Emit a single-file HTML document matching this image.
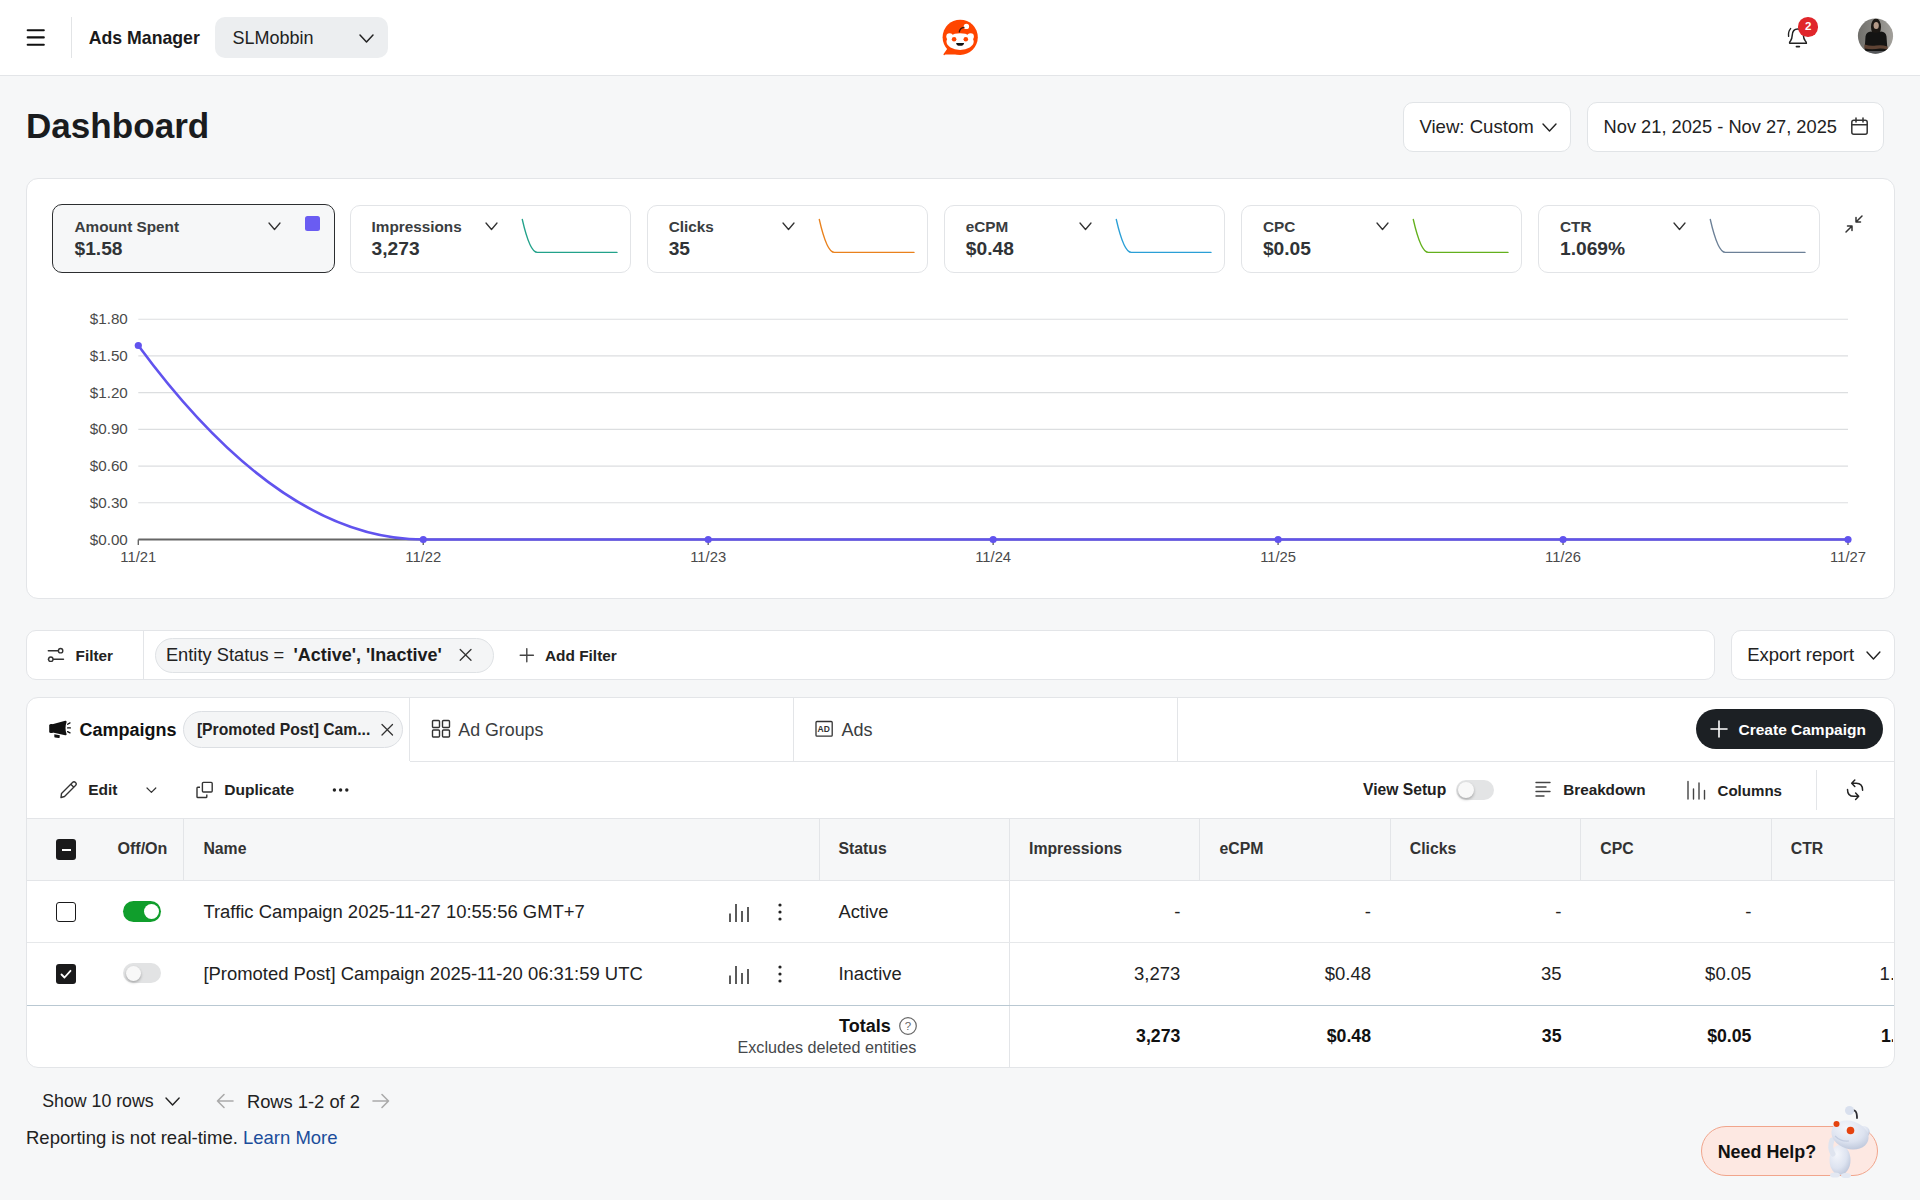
<!DOCTYPE html>
<html><head><meta charset="utf-8"><title>Ads Manager - Dashboard</title>
<style>
html,body{margin:0;padding:0;}
body{width:1920px;height:1200px;overflow:hidden;position:relative;background:#f6f7f8;font-family:"Liberation Sans",sans-serif;}
.t{position:absolute;line-height:1;white-space:nowrap;}
.r{position:absolute;}
svg.r{overflow:visible;}
</style></head><body>
<div class="r" style="left:0px;top:0px;width:1920px;height:75px;background:#fff;"></div>
<div class="r" style="left:0px;top:75px;width:1920px;height:1px;background:#e3e5e8;"></div>
<svg class="r" style="left:26px;top:26px" width="20" height="22" viewBox="0 0 20 22"><path d="M1.7 4.2H17.8M1.7 11.4H17.8M1.7 18.8H17.8" stroke="#111" stroke-width="2.1" stroke-linecap="round"/></svg>
<div class="r" style="left:71px;top:17px;width:1px;height:41px;background:#e2e4e6;"></div>
<div class="t" style="left:88.75px;top:29.52px;font-size:17.7px;font-weight:700;color:#1a1a1b;">Ads Manager</div>
<div class="r" style="left:215px;top:17px;width:173px;height:41px;background:#eceef0;border-radius:10px;"></div>
<div class="t" style="left:232.50px;top:29.26px;font-size:18px;color:#222;">SLMobbin</div>
<svg class="r" style="left:358px;top:33px" width="17" height="11" viewBox="-2 -2 17 11"><path d="M0 0 L6.5 7 L13 0" fill="none" stroke="#222" stroke-width="1.5" stroke-linecap="round" stroke-linejoin="round"/></svg>
<svg class="r" style="left:941px;top:19px" width="38" height="38" viewBox="0 0 38 38"><circle cx="19.2" cy="18.3" r="17.6" fill="#ff4500"/><path d="M3.2 35.4H19.5L9.5 25.5Z" fill="#ff4500"/><path d="M3.2 35.4L9 27.2" stroke="#ff4500" stroke-width="1.5" stroke-linecap="round"/><ellipse cx="19.1" cy="22.6" rx="13.6" ry="8.3" fill="#fff"/><circle cx="8.6" cy="17.6" r="3.3" fill="#fff"/><circle cx="29.6" cy="17.6" r="3.3" fill="#fff"/><circle cx="25.4" cy="7.4" r="2.7" fill="#fff"/><path d="M18.3 12.8Q19 8.8 23 8.3" stroke="#3a1a10" stroke-width="1.3" fill="none" stroke-linecap="round"/><circle cx="13.1" cy="20.2" r="2.3" fill="#ff4500"/><circle cx="24.8" cy="20.2" r="2.3" fill="#ff4500"/><path d="M15.1 23.9H23.1Q22.8 26.8 19.1 26.8Q15.4 26.8 15.1 23.9Z" fill="#111"/></svg>
<svg class="r" style="left:1786px;top:26px" width="24" height="24" viewBox="0 0 24 24"><path d="M3.6 17.2H20.4Q20.6 16.4 19.2 14.8Q17.6 12.8 17.4 9.5Q17.2 3 11.8 3Q6.4 3 6.2 9.5Q6 12.8 4.6 14.8Q3.2 16.4 3.6 17.2Z" fill="none" stroke="#222" stroke-width="1.5" stroke-linejoin="round"/><path d="M10.5 20.6H13.3" stroke="#222" stroke-width="1.8" stroke-linecap="round"/><path d="M4.6 2.6Q2 5.5 2.6 10.3" stroke="#222" stroke-width="1.4" fill="none" stroke-linecap="round"/></svg>
<div class="r" style="left:1798.4px;top:17.1px;width:19.59999999999991px;height:19.6px;background:#e0262b;border-radius:50%;"></div>
<div class="t" style="left:1798.4px;width:19.6px;text-align:center;top:20.87px;font-size:11.5px;font-weight:700;color:#fff;">2</div>
<svg class="r" style="left:1857px;top:18px" width="37" height="37" viewBox="0 0 37 37"><defs><clipPath id="av"><circle cx="18.5" cy="18.1" r="17.6"/></clipPath><linearGradient id="avg" x1="0" y1="0" x2="1" y2="0"><stop offset="0" stop-color="#6f6e6a"/><stop offset="1" stop-color="#a3a19c"/></linearGradient></defs><g clip-path="url(#av)"><rect width="37" height="37" fill="url(#avg)"/><ellipse cx="19" cy="9" rx="5" ry="8.5" fill="#1c1814"/><ellipse cx="19.2" cy="7.5" rx="2.6" ry="3.6" fill="#b49a88"/><path d="M8.5 18.5Q9 14 14 13.5L19 15L24 13.5Q29 14 29.5 18.5L30.5 33H7.5Z" fill="#141413"/><path d="M7.5 26.5Q14 28.5 19 27.5Q25 26.5 30.5 28.5L30.5 31.5Q24 30 19 31Q13 31.5 7.5 30.5Z" fill="#5e4334"/><rect x="8" y="33" width="22" height="5" fill="#55575a"/></g></svg>
<div class="t" style="left:26.00px;top:108.09px;font-size:35.1px;font-weight:700;color:#1a1c1e;">Dashboard</div>
<div class="r" style="left:1403px;top:102px;width:168px;height:50px;background:#fff;border:1px solid #e1e4e7;border-radius:10px;box-sizing:border-box;"></div>
<div class="t" style="left:1419.40px;top:117.86px;font-size:18.6px;color:#222;">View: Custom</div>
<svg class="r" style="left:1541px;top:122px" width="17" height="11" viewBox="-2 -2 17 11"><path d="M0 0 L6.5 7 L13 0" fill="none" stroke="#222" stroke-width="1.4" stroke-linecap="round" stroke-linejoin="round"/></svg>
<div class="r" style="left:1587px;top:102px;width:297px;height:50px;background:#fff;border:1px solid #e1e4e7;border-radius:10px;box-sizing:border-box;"></div>
<div class="t" style="left:1603.60px;top:118.15px;font-size:18.25px;color:#222;">Nov 21, 2025 - Nov 27, 2025</div>
<svg class="r" style="left:1850px;top:117px" width="19" height="19" viewBox="0 0 19 19"><rect x="1.8" y="3.2" width="15.4" height="14" rx="2" fill="none" stroke="#333" stroke-width="1.5"/><path d="M1.8 7.8H17.2M6 1V5M13 1V5" stroke="#333" stroke-width="1.5" stroke-linecap="round"/></svg>
<div class="r" style="left:25.5px;top:178px;width:1869.0px;height:421px;background:#fff;border:1px solid #e3e5e8;border-radius:12px;box-sizing:border-box;"></div>
<div class="r" style="left:52px;top:204px;width:282.5px;height:69px;background:#f6f7f8;border:1.7px solid #2c2e30;border-radius:10px;box-sizing:border-box;"></div>
<svg class="r" style="left:267px;top:221px" width="15" height="10.5" viewBox="-2 -2 15 10.5"><path d="M0 0 L5.5 6.5 L11 0" fill="none" stroke="#333" stroke-width="1.3" stroke-linecap="round" stroke-linejoin="round"/></svg>
<div class="r" style="left:305px;top:216px;width:15px;height:15px;background:#6a5cf2;border-radius:2.5px;"></div>
<div class="t" style="left:74.50px;top:219.05px;font-size:15.3px;font-weight:700;color:#3a3d40;">Amount Spent</div>
<div class="t" style="left:74.50px;top:239.05px;font-size:19.2px;font-weight:700;color:#303336;">$1.58</div>
<div class="r" style="left:349.60px;top:204.5px;width:281.5px;height:68px;background:#fff;border:1px solid #e2e4e7;border-radius:10px;box-sizing:border-box;"></div>
<svg class="r" style="left:484.0px;top:221px" width="15.0" height="10.5" viewBox="-2 -2 15.0 10.5"><path d="M0 0 L5.5 6.5 L11.0 0" fill="none" stroke="#333" stroke-width="1.3" stroke-linecap="round" stroke-linejoin="round"/></svg>
<svg class="r" style="left:521.6px;top:218px" width="96" height="37" viewBox="0 0 96 37"><path d="M0.3 1.5C5.3 23.4 10.3 34.4 15.3 34.4L95 34.4" fill="none" stroke="#22a28a" stroke-width="1.35" stroke-linecap="round"/></svg>
<div class="t" style="left:371.60px;top:219.05px;font-size:15.3px;font-weight:700;color:#3a3d40;">Impressions</div>
<div class="t" style="left:371.60px;top:239.05px;font-size:19.2px;font-weight:700;color:#303336;">3,273</div>
<div class="r" style="left:646.70px;top:204.5px;width:281.5px;height:68px;background:#fff;border:1px solid #e2e4e7;border-radius:10px;box-sizing:border-box;"></div>
<svg class="r" style="left:781.1px;top:221px" width="15.0" height="10.5" viewBox="-2 -2 15.0 10.5"><path d="M0 0 L5.5 6.5 L11.0 0" fill="none" stroke="#333" stroke-width="1.3" stroke-linecap="round" stroke-linejoin="round"/></svg>
<svg class="r" style="left:818.7px;top:218px" width="96" height="37" viewBox="0 0 96 37"><path d="M0.3 1.5C5.3 23.4 10.3 34.4 15.3 34.4L95 34.4" fill="none" stroke="#e9811c" stroke-width="1.35" stroke-linecap="round"/></svg>
<div class="t" style="left:668.70px;top:219.05px;font-size:15.3px;font-weight:700;color:#3a3d40;">Clicks</div>
<div class="t" style="left:668.70px;top:239.05px;font-size:19.2px;font-weight:700;color:#303336;">35</div>
<div class="r" style="left:943.80px;top:204.5px;width:281.5px;height:68px;background:#fff;border:1px solid #e2e4e7;border-radius:10px;box-sizing:border-box;"></div>
<svg class="r" style="left:1078.2px;top:221px" width="15.0" height="10.5" viewBox="-2 -2 15.0 10.5"><path d="M0 0 L5.5 6.5 L11.0 0" fill="none" stroke="#333" stroke-width="1.3" stroke-linecap="round" stroke-linejoin="round"/></svg>
<svg class="r" style="left:1115.8px;top:218px" width="96" height="37" viewBox="0 0 96 37"><path d="M0.3 1.5C5.3 23.4 10.3 34.4 15.3 34.4L95 34.4" fill="none" stroke="#2a9fd6" stroke-width="1.35" stroke-linecap="round"/></svg>
<div class="t" style="left:965.80px;top:219.05px;font-size:15.3px;font-weight:700;color:#3a3d40;">eCPM</div>
<div class="t" style="left:965.80px;top:239.05px;font-size:19.2px;font-weight:700;color:#303336;">$0.48</div>
<div class="r" style="left:1240.90px;top:204.5px;width:281.5px;height:68px;background:#fff;border:1px solid #e2e4e7;border-radius:10px;box-sizing:border-box;"></div>
<svg class="r" style="left:1375.3000000000002px;top:221px" width="15.0" height="10.5" viewBox="-2 -2 15.0 10.5"><path d="M0 0 L5.5 6.5 L11.0 0" fill="none" stroke="#333" stroke-width="1.3" stroke-linecap="round" stroke-linejoin="round"/></svg>
<svg class="r" style="left:1412.9px;top:218px" width="96" height="37" viewBox="0 0 96 37"><path d="M0.3 1.5C5.3 23.4 10.3 34.4 15.3 34.4L95 34.4" fill="none" stroke="#63b01c" stroke-width="1.35" stroke-linecap="round"/></svg>
<div class="t" style="left:1262.90px;top:219.05px;font-size:15.3px;font-weight:700;color:#3a3d40;">CPC</div>
<div class="t" style="left:1262.90px;top:239.05px;font-size:19.2px;font-weight:700;color:#303336;">$0.05</div>
<div class="r" style="left:1538.00px;top:204.5px;width:281.5px;height:68px;background:#fff;border:1px solid #e2e4e7;border-radius:10px;box-sizing:border-box;"></div>
<svg class="r" style="left:1672.4px;top:221px" width="15.0" height="10.5" viewBox="-2 -2 15.0 10.5"><path d="M0 0 L5.5 6.5 L11.0 0" fill="none" stroke="#333" stroke-width="1.3" stroke-linecap="round" stroke-linejoin="round"/></svg>
<svg class="r" style="left:1710.0px;top:218px" width="96" height="37" viewBox="0 0 96 37"><path d="M0.3 1.5C5.3 23.4 10.3 34.4 15.3 34.4L95 34.4" fill="none" stroke="#6c8097" stroke-width="1.35" stroke-linecap="round"/></svg>
<div class="t" style="left:1560.00px;top:219.05px;font-size:15.3px;font-weight:700;color:#3a3d40;">CTR</div>
<div class="t" style="left:1560.00px;top:239.05px;font-size:19.2px;font-weight:700;color:#303336;">1.069%</div>
<svg class="r" style="left:1844px;top:214px" width="20" height="20" viewBox="0 0 20 20"><path d="M2 18L8 12M8 12V16.5M8 12H3.5M18 2L12 8M12 8V3.5M12 8H16.5" fill="none" stroke="#333" stroke-width="1.5" stroke-linecap="round" stroke-linejoin="round"/></svg>
<svg class="r" style="left:0;top:0" width="1920" height="600"><line x1="138.3" y1="319.20" x2="1848" y2="319.20" stroke="#dcdee0" stroke-width="1.1"/><line x1="138.3" y1="355.92" x2="1848" y2="355.92" stroke="#dcdee0" stroke-width="1.1"/><line x1="138.3" y1="392.64" x2="1848" y2="392.64" stroke="#dcdee0" stroke-width="1.1"/><line x1="138.3" y1="429.36" x2="1848" y2="429.36" stroke="#dcdee0" stroke-width="1.1"/><line x1="138.3" y1="466.08" x2="1848" y2="466.08" stroke="#dcdee0" stroke-width="1.1"/><line x1="138.3" y1="502.80" x2="1848" y2="502.80" stroke="#dcdee0" stroke-width="1.1"/><line x1="138.3" y1="539.5" x2="1848" y2="539.5" stroke="#666" stroke-width="1.8"/><line x1="138.30" y1="539.5" x2="138.30" y2="545.0" stroke="#666" stroke-width="1.4"/><line x1="423.25" y1="539.5" x2="423.25" y2="545.0" stroke="#666" stroke-width="1.4"/><line x1="708.20" y1="539.5" x2="708.20" y2="545.0" stroke="#666" stroke-width="1.4"/><line x1="993.15" y1="539.5" x2="993.15" y2="545.0" stroke="#666" stroke-width="1.4"/><line x1="1278.10" y1="539.5" x2="1278.10" y2="545.0" stroke="#666" stroke-width="1.4"/><line x1="1563.05" y1="539.5" x2="1563.05" y2="545.0" stroke="#666" stroke-width="1.4"/><line x1="1848.00" y1="539.5" x2="1848.00" y2="545.0" stroke="#666" stroke-width="1.4"/><path d="M138.30 345.5 C233.30 474.70 328.25 539.5 423.25 539.5 L1848.00 539.5" fill="none" stroke="#6153ee" stroke-width="2.6"/><circle cx="138.30" cy="345.5" r="3.6" fill="#6153ee"/><circle cx="423.25" cy="539.5" r="3.6" fill="#6153ee"/><circle cx="708.20" cy="539.5" r="3.6" fill="#6153ee"/><circle cx="993.15" cy="539.5" r="3.6" fill="#6153ee"/><circle cx="1278.10" cy="539.5" r="3.6" fill="#6153ee"/><circle cx="1563.05" cy="539.5" r="3.6" fill="#6153ee"/><circle cx="1848.00" cy="539.5" r="3.6" fill="#6153ee"/></svg>
<div class="t" style="right:1792.20px;text-align:right;top:311.33px;font-size:15.2px;color:#4a4a4a;">$1.80</div>
<div class="t" style="right:1792.20px;text-align:right;top:348.05px;font-size:15.2px;color:#4a4a4a;">$1.50</div>
<div class="t" style="right:1792.20px;text-align:right;top:384.77px;font-size:15.2px;color:#4a4a4a;">$1.20</div>
<div class="t" style="right:1792.20px;text-align:right;top:421.49px;font-size:15.2px;color:#4a4a4a;">$0.90</div>
<div class="t" style="right:1792.20px;text-align:right;top:458.21px;font-size:15.2px;color:#4a4a4a;">$0.60</div>
<div class="t" style="right:1792.20px;text-align:right;top:494.93px;font-size:15.2px;color:#4a4a4a;">$0.30</div>
<div class="t" style="right:1792.20px;text-align:right;top:531.65px;font-size:15.2px;color:#4a4a4a;">$0.00</div>
<div class="t" style="left:98.30px;width:80px;text-align:center;top:550.07px;font-size:14.8px;color:#4a4a4a;">11/21</div>
<div class="t" style="left:383.25px;width:80px;text-align:center;top:550.07px;font-size:14.8px;color:#4a4a4a;">11/22</div>
<div class="t" style="left:668.20px;width:80px;text-align:center;top:550.07px;font-size:14.8px;color:#4a4a4a;">11/23</div>
<div class="t" style="left:953.15px;width:80px;text-align:center;top:550.07px;font-size:14.8px;color:#4a4a4a;">11/24</div>
<div class="t" style="left:1238.10px;width:80px;text-align:center;top:550.07px;font-size:14.8px;color:#4a4a4a;">11/25</div>
<div class="t" style="left:1523.05px;width:80px;text-align:center;top:550.07px;font-size:14.8px;color:#4a4a4a;">11/26</div>
<div class="t" style="left:1808.00px;width:80px;text-align:center;top:550.07px;font-size:14.8px;color:#4a4a4a;">11/27</div>
<div class="r" style="left:25.5px;top:630px;width:1689.0px;height:50px;background:#fff;border:1px solid #e3e5e8;border-radius:10px;box-sizing:border-box;"></div>
<div class="r" style="left:143px;top:631px;width:1px;height:48px;background:#e3e5e8;"></div>
<svg class="r" style="left:46px;top:646px" width="20" height="18" viewBox="0 0 20 18"><path d="M2.3 4.7H12.5M2.3 13.2H17.5" stroke="#333" stroke-width="1.4" stroke-linecap="round"/><circle cx="14.6" cy="4.7" r="2.2" fill="#fff" stroke="#333" stroke-width="1.4"/><circle cx="4.8" cy="13.2" r="2.2" fill="#fff" stroke="#333" stroke-width="1.4"/></svg>
<div class="t" style="left:75.60px;top:648.05px;font-size:15.3px;font-weight:700;color:#222;">Filter</div>
<div class="r" style="left:155px;top:638px;width:338.5px;height:34.5px;background:#f4f5f6;border:1px solid #dfe2e5;border-radius:18px;box-sizing:border-box;"></div>
<div class="t" style="left:165.90px;top:645.91px;font-size:18.3px;color:#222;">Entity Status =</div>
<div class="t" style="left:293.50px;top:646.16px;font-size:18.0px;font-weight:700;color:#1c1c1c;">'Active', 'Inactive'</div>
<svg class="r" style="left:458px;top:648px" width="15" height="15" viewBox="0 0 15 15"><path d="M2.2 1.5L13 12.3M13 1.5L2.2 12.3" stroke="#333" stroke-width="1.3" stroke-linecap="round"/></svg>
<svg class="r" style="left:518px;top:647px" width="18" height="18" viewBox="0 0 18 18"><path d="M8.8 1.6V14.8M2.2 8.2H15.4" stroke="#444" stroke-width="1.4" stroke-linecap="round"/></svg>
<div class="t" style="left:545.00px;top:647.96px;font-size:15.4px;font-weight:700;color:#222;">Add Filter</div>
<div class="r" style="left:1731px;top:630px;width:164px;height:50px;background:#fff;border:1px solid #e3e5e8;border-radius:10px;box-sizing:border-box;"></div>
<div class="t" style="left:1747.20px;top:646.34px;font-size:18.5px;color:#222;">Export report</div>
<svg class="r" style="left:1864.7px;top:650px" width="16.899999999999864" height="11" viewBox="-2 -2 16.899999999999864 11"><path d="M0 0 L6.449999999999932 7 L12.899999999999864 0" fill="none" stroke="#222" stroke-width="1.4" stroke-linecap="round" stroke-linejoin="round"/></svg>
<div class="r" style="left:25.5px;top:696.5px;width:1869.0px;height:371.5px;background:#fff;border:1px solid #e3e5e8;border-radius:12px;box-sizing:border-box;"></div>
<svg class="r" style="left:48px;top:719px" width="24" height="22" viewBox="0 0 24 22"><rect x="1.2" y="5" width="4" height="9" rx="1.6" fill="#111"/><path d="M3.5 5.5L17.2 1.8Q18.6 1.6 18.6 3Q16.4 9.1 18.6 15.2Q18.6 16.6 17.2 16.2L3.5 13.3Z" fill="#111"/><path d="M6.3 15.2L11.8 16.3L11.6 18.6Q11.4 19.2 10.6 19.1L7 18.6Q6.3 18.4 6.3 17.6Z" fill="#111"/><path d="M19.6 5.2L22 3.9M19.6 8.9H22.4M19.6 12.6L22 13.9" stroke="#111" stroke-width="1.3" stroke-linecap="round"/></svg>
<div class="t" style="left:79.60px;top:721.36px;font-size:18px;font-weight:700;color:#111;">Campaigns</div>
<div class="r" style="left:183.4px;top:711.3px;width:219.6px;height:36.700000000000045px;background:#f4f5f6;border:1px solid #dcdfe3;border-radius:19px;box-sizing:border-box;"></div>
<div class="t" style="left:196.90px;top:721.71px;font-size:15.7px;font-weight:700;color:#222;">[Promoted Post] Cam...</div>
<svg class="r" style="left:380px;top:723px" width="15" height="15" viewBox="0 0 15 15"><path d="M2 1.5L12.5 12M12.5 1.5L2 12" stroke="#333" stroke-width="1.3" stroke-linecap="round"/></svg>
<div class="r" style="left:409px;top:697px;width:1px;height:64px;background:#e3e5e8;"></div>
<div class="r" style="left:410px;top:761px;width:1484px;height:1px;background:#e3e5e8;"></div>
<svg class="r" style="left:430.7px;top:719px" width="21" height="20" viewBox="0 0 21 20"><rect x="1.5" y="1.5" width="7" height="7" rx="1" fill="none" stroke="#333" stroke-width="1.4"/><rect x="11.5" y="1.5" width="7" height="7" rx="1" fill="none" stroke="#333" stroke-width="1.4"/><rect x="1.5" y="11" width="7" height="7" rx="1" fill="none" stroke="#333" stroke-width="1.4"/><rect x="11.5" y="11" width="7" height="7" rx="1" fill="none" stroke="#333" stroke-width="1.4"/></svg>
<div class="t" style="left:458.30px;top:721.53px;font-size:17.8px;color:#3a3d40;">Ad Groups</div>
<div class="r" style="left:792.5px;top:697px;width:1.0px;height:64px;background:#e3e5e8;"></div>
<svg class="r" style="left:814px;top:720px" width="20" height="18" viewBox="0 0 20 18"><rect x="2" y="1.5" width="16.2" height="14.7" rx="1" fill="none" stroke="#333" stroke-width="1.3"/><text x="9.75" y="12.2" font-family="Liberation Sans" font-weight="700" font-size="8.5" text-anchor="middle" fill="#333">AD</text></svg>
<div class="t" style="left:841.60px;top:720.76px;font-size:18px;color:#3a3d40;">Ads</div>
<div class="r" style="left:1176.5px;top:697px;width:1.0px;height:64px;background:#e3e5e8;"></div>
<div class="r" style="left:1695.5px;top:708.5px;width:187.5px;height:40.5px;background:#1c2024;border-radius:20px;"></div>
<svg class="r" style="left:1709px;top:709px" width="20" height="40" viewBox="0 0 20 40"><path d="M10 12V28M2 20H18" stroke="#fff" stroke-width="1.6" stroke-linecap="round"/></svg>
<div class="t" style="left:1738.50px;top:722.18px;font-size:15.5px;font-weight:700;color:#fff;">Create Campaign</div>
<svg class="r" style="left:58px;top:779px" width="21" height="21" viewBox="0 0 21 21"><path d="M3 18.5L3.5 14.5L14.5 3.5Q16 2 17.5 3.5Q19 5 17.5 6.5L6.5 17.5Z" fill="none" stroke="#333" stroke-width="1.4" stroke-linejoin="round"/><path d="M12.8 5.2L15.8 8.2" stroke="#333" stroke-width="1.4"/></svg>
<div class="t" style="left:88.20px;top:782.08px;font-size:15.5px;font-weight:700;color:#222;">Edit</div>
<svg class="r" style="left:145px;top:785.8px" width="12.800000000000011" height="8.400000000000091" viewBox="-2 -2 12.800000000000011 8.400000000000091"><path d="M0 0 L4.400000000000006 4.400000000000091 L8.800000000000011 0" fill="none" stroke="#333" stroke-width="1.2" stroke-linecap="round" stroke-linejoin="round"/></svg>
<svg class="r" style="left:195px;top:780px" width="20" height="20" viewBox="0 0 20 20"><rect x="7.4" y="2.4" width="9.8" height="9.6" rx="1" fill="none" stroke="#333" stroke-width="1.4"/><path d="M5 7.2H2.8Q2 7.2 2 8V16.7Q2 17.5 2.8 17.5H11Q11.8 17.5 11.8 16.7V14.6" fill="none" stroke="#333" stroke-width="1.4"/></svg>
<div class="t" style="left:224.20px;top:782.04px;font-size:15.55px;font-weight:700;color:#222;">Duplicate</div>
<svg class="r" style="left:330px;top:784px" width="22" height="12" viewBox="0 0 22 12"><circle cx="4.4" cy="6" r="1.7" fill="#222"/><circle cx="10.6" cy="6" r="1.7" fill="#222"/><circle cx="16.8" cy="6" r="1.7" fill="#222"/></svg>
<div class="t" style="left:1363.00px;top:782.04px;font-size:15.67px;font-weight:700;color:#222;">View Setup</div>
<div class="r" style="left:1456.3px;top:779.7px;width:37.700000000000045px;height:20.0px;background:#e3e4e5;border-radius:10px;"></div>
<div class="r" style="left:1457.6px;top:782px;width:16.0px;height:16px;background:#f8f8f8;border-radius:50%;box-shadow:0 1.5px 3px rgba(0,0,0,.28);"></div>
<svg class="r" style="left:1534px;top:779px" width="18" height="20" viewBox="0 0 18 20"><path d="M2 3.5H16M2 8H12M2 12.5H16M2 17H10" stroke="#444" stroke-width="1.4" stroke-linecap="round"/></svg>
<div class="t" style="left:1563.20px;top:782.37px;font-size:15.27px;font-weight:700;color:#222;">Breakdown</div>
<svg class="r" style="left:1686px;top:779px" width="20" height="22" viewBox="0 0 20 22"><path d="M2 2.5V20M7.5 10V20M13 4V20M18.5 11.5V20" stroke="#444" stroke-width="1.4" stroke-linecap="round"/></svg>
<div class="t" style="left:1717.50px;top:782.53px;font-size:15.08px;font-weight:700;color:#222;">Columns</div>
<div class="r" style="left:1816px;top:770px;width:1px;height:39.5px;background:#e3e5e8;"></div>
<svg class="r" style="left:1844px;top:778px" width="22" height="24" viewBox="0 0 22 24"><path d="M18.6 12.2Q18.6 5.3 12.3 5.3H7.9M10.8 2.1L7.7 5.3L10.8 8.5" fill="none" stroke="#222" stroke-width="1.5" stroke-linecap="round" stroke-linejoin="round"/><path d="M3.5 11.4Q3.5 18.3 9.8 18.3H14.5M11.6 15.1L14.7 18.3L11.6 21.5" fill="none" stroke="#222" stroke-width="1.5" stroke-linecap="round" stroke-linejoin="round"/></svg>
<div class="r" style="left:27px;top:818px;width:1867px;height:62px;background:#f6f7f8;"></div>
<div class="r" style="left:27px;top:818px;width:1867px;height:1px;background:#e3e5e8;"></div>
<div class="r" style="left:27px;top:880px;width:1867px;height:1px;background:#e3e5e8;"></div>
<div class="r" style="left:183px;top:819px;width:1px;height:61px;background:#e3e5e8;"></div>
<div class="r" style="left:818.5px;top:819px;width:1.0px;height:61px;background:#e3e5e8;"></div>
<div class="r" style="left:1008.5px;top:819px;width:1.0px;height:61px;background:#e3e5e8;"></div>
<div class="r" style="left:1199px;top:819px;width:1px;height:61px;background:#e3e5e8;"></div>
<div class="r" style="left:1389.5px;top:819px;width:1.0px;height:61px;background:#e3e5e8;"></div>
<div class="r" style="left:1580px;top:819px;width:1px;height:61px;background:#e3e5e8;"></div>
<div class="r" style="left:1770.5px;top:819px;width:1.0px;height:61px;background:#e3e5e8;"></div>
<div class="r" style="left:1008.5px;top:881px;width:1.0px;height:186px;background:#e3e5e8;"></div>
<div class="r" style="left:55.8px;top:839.2px;width:20.400000000000006px;height:20.59999999999991px;background:#1a1a1b;border-radius:3px;"></div>
<div class="r" style="left:61.5px;top:848.5px;width:9.0px;height:2.0px;background:#fff;"></div>
<div class="t" style="left:117.40px;top:839.67px;font-size:16.1px;font-weight:700;color:#333;">Off/On</div>
<div class="t" style="left:203.40px;top:840.63px;font-size:15.8px;font-weight:700;color:#333;">Name</div>
<div class="t" style="left:838.40px;top:840.63px;font-size:15.8px;font-weight:700;color:#333;">Status</div>
<div class="t" style="left:1029.00px;top:840.63px;font-size:15.8px;font-weight:700;color:#333;">Impressions</div>
<div class="t" style="left:1219.50px;top:840.63px;font-size:15.8px;font-weight:700;color:#333;">eCPM</div>
<div class="t" style="left:1409.80px;top:840.63px;font-size:15.8px;font-weight:700;color:#333;">Clicks</div>
<div class="t" style="left:1600.30px;top:840.63px;font-size:15.8px;font-weight:700;color:#333;">CPC</div>
<div class="t" style="left:1790.80px;top:840.63px;font-size:15.8px;font-weight:700;color:#333;">CTR</div>
<div class="r" style="left:27px;top:942px;width:1867px;height:1px;background:#e6e8ea;"></div>
<div class="r" style="left:27px;top:1004.5px;width:1867px;height:1.7000000000000455px;background:#b9c8d2;"></div>
<div class="r" style="left:55.8px;top:901.5px;width:20.400000000000006px;height:20.0px;background:#fff;border:1.6px solid #1a1a1b;border-radius:3px;box-sizing:border-box;"></div>
<div class="r" style="left:123px;top:901.0px;width:38px;height:20.5px;background:#109e2c;border-radius:11px;"></div>
<div class="r" style="left:143.5px;top:903.5px;width:15.5px;height:15.5px;background:#fff;border-radius:50%;"></div>
<div class="t" style="left:203.40px;top:903.48px;font-size:18.45px;color:#222;">Traffic Campaign 2025-11-27 10:55:56 GMT+7</div>
<svg class="r" style="left:727px;top:901.5px" width="24" height="21" viewBox="0 0 24 21"><path d="M3 20V11.5M9 20V2M15 20V9M21 20V5" stroke="#333" stroke-width="1.6" stroke-linecap="butt"/></svg>
<svg class="r" style="left:775px;top:901.5px" width="10" height="20" viewBox="0 0 10 20"><circle cx="5" cy="3" r="1.6" fill="#222"/><circle cx="5" cy="10" r="1.6" fill="#222"/><circle cx="5" cy="17" r="1.6" fill="#222"/></svg>
<div class="t" style="left:838.40px;top:902.77px;font-size:18.35px;color:#222;">Active</div>
<div class="t" style="right:739.70px;text-align:right;top:903.44px;font-size:18.5px;color:#222;">-</div>
<div class="t" style="right:549.00px;text-align:right;top:903.44px;font-size:18.5px;color:#222;">-</div>
<div class="t" style="right:358.50px;text-align:right;top:903.44px;font-size:18.5px;color:#222;">-</div>
<div class="t" style="right:168.60px;text-align:right;top:903.44px;font-size:18.5px;color:#222;">-</div>
<div class="r" style="left:55.8px;top:963.5px;width:20.400000000000006px;height:20.0px;background:#1a1a1b;border-radius:3px;"></div>
<svg class="r" style="left:56px;top:963.5px" width="20" height="20" viewBox="0 0 20 20"><path d="M5.5 10.5L8.5 13.5L14.5 6.8" fill="none" stroke="#fff" stroke-width="1.8" stroke-linecap="round" stroke-linejoin="round"/></svg>
<div class="r" style="left:123px;top:963.2px;width:38px;height:19.899999999999977px;background:#e2e3e4;border-radius:11px;"></div>
<div class="r" style="left:125.7px;top:965.9px;width:15.299999999999997px;height:15.200000000000045px;background:#f8f8f8;border-radius:50%;box-shadow:0 1.5px 3px rgba(0,0,0,.28);"></div>
<div class="t" style="left:203.40px;top:965.48px;font-size:18.45px;color:#222;">[Promoted Post] Campaign 2025-11-20 06:31:59 UTC</div>
<svg class="r" style="left:727px;top:963.5px" width="24" height="21" viewBox="0 0 24 21"><path d="M3 20V11.5M9 20V2M15 20V9M21 20V5" stroke="#333" stroke-width="1.6" stroke-linecap="butt"/></svg>
<svg class="r" style="left:775px;top:963.5px" width="10" height="20" viewBox="0 0 10 20"><circle cx="5" cy="3" r="1.6" fill="#222"/><circle cx="5" cy="10" r="1.6" fill="#222"/><circle cx="5" cy="17" r="1.6" fill="#222"/></svg>
<div class="t" style="left:838.40px;top:964.77px;font-size:18.35px;color:#222;">Inactive</div>
<div class="t" style="right:739.70px;text-align:right;top:965.44px;font-size:18.5px;color:#222;">3,273</div>
<div class="t" style="right:549.00px;text-align:right;top:965.44px;font-size:18.5px;color:#222;">$0.48</div>
<div class="t" style="right:358.50px;text-align:right;top:965.44px;font-size:18.5px;color:#222;">35</div>
<div class="t" style="right:168.60px;text-align:right;top:965.44px;font-size:18.5px;color:#222;">$0.05</div>
<div class="clip" style="left:1009px;top:940px;width:884px;height:70px;overflow:hidden;position:absolute;"><div class="t" style="left:870.5999999999999px;top:25.44px;font-size:18.5px;color:#222;">1.069%</div></div>
<div class="t" style="left:839.00px;top:1017.26px;font-size:18px;font-weight:700;color:#111;">Totals</div>
<svg class="r" style="left:898px;top:1016px" width="20" height="20" viewBox="0 0 20 20"><circle cx="10" cy="10" r="8.3" fill="none" stroke="#666" stroke-width="1.2"/><text x="10" y="14.2" font-family="Liberation Sans" font-size="11.5" text-anchor="middle" fill="#666">?</text></svg>
<div class="t" style="left:737.50px;top:1039.32px;font-size:16.16px;color:#45484b;">Excludes deleted entities</div>
<div class="t" style="right:739.70px;text-align:right;top:1027.82px;font-size:17.7px;font-weight:700;color:#111;">3,273</div>
<div class="t" style="right:549.00px;text-align:right;top:1027.82px;font-size:17.7px;font-weight:700;color:#111;">$0.48</div>
<div class="t" style="right:358.50px;text-align:right;top:1027.82px;font-size:17.7px;font-weight:700;color:#111;">35</div>
<div class="t" style="right:168.60px;text-align:right;top:1027.82px;font-size:17.7px;font-weight:700;color:#111;">$0.05</div>
<div style="left:1009px;top:1010px;width:884px;height:50px;overflow:hidden;position:absolute;"><div class="t" style="left:872px;top:17.82px;font-size:17.7px;font-weight:700;color:#111;">1.069%</div></div>
<div class="t" style="left:42.20px;top:1093.27px;font-size:17.75px;color:#222;">Show 10 rows</div>
<svg class="r" style="left:163.6px;top:1095.5px" width="17.150000000000006" height="11.0" viewBox="-2 -2 17.150000000000006 11.0"><path d="M0 0 L6.575000000000003 7.0 L13.150000000000006 0" fill="none" stroke="#222" stroke-width="1.4" stroke-linecap="round" stroke-linejoin="round"/></svg>
<svg class="r" style="left:215px;top:1092px" width="20" height="18" viewBox="0 0 20 18"><path d="M18 9H2.5M9 2.5L2.5 9L9 15.5" fill="none" stroke="#aaa" stroke-width="1.6" stroke-linecap="round" stroke-linejoin="round"/></svg>
<div class="t" style="left:246.90px;top:1092.78px;font-size:18.33px;color:#222;">Rows 1-2 of 2</div>
<svg class="r" style="left:371px;top:1092px" width="20" height="18" viewBox="0 0 20 18"><path d="M2 9H17.5M11 2.5L17.5 9L11 15.5" fill="none" stroke="#aaa" stroke-width="1.6" stroke-linecap="round" stroke-linejoin="round"/></svg>
<div class="t" style="left:26.00px;top:1129.14px;font-size:18.5px;color:#222;">Reporting is not real-time. <span style="color:#1b4d9b">Learn More</span></div>
<div class="r" style="left:1700.5px;top:1126.4px;width:177.5px;height:50.0px;background:#fde8e2;border:1.2px solid #f1a58c;border-radius:25px;box-sizing:border-box;"></div>
<div class="t" style="left:1717.70px;top:1143.65px;font-size:17.9px;font-weight:700;color:#111;">Need Help?</div>
<svg class="r" style="left:1824px;top:1102px" width="52" height="76" viewBox="0 0 52 76"><defs><radialGradient id="sg" cx="0.35" cy="0.3" r="0.8"><stop offset="0" stop-color="#f4f6fb"/><stop offset="0.6" stop-color="#dde3f0"/><stop offset="1" stop-color="#b9c3d8"/></radialGradient></defs><ellipse cx="16" cy="58" rx="10.5" ry="15" fill="url(#sg)"/><ellipse cx="11" cy="73" rx="5" ry="2.6" fill="#e3e8f2"/><ellipse cx="22" cy="73.5" rx="5" ry="2.6" fill="#e3e8f2"/><path d="M9 52Q5 46 8 38" stroke="#dfe4ef" stroke-width="5" fill="none" stroke-linecap="round"/><ellipse cx="39.5" cy="30" rx="6.2" ry="6" fill="url(#sg)"/><ellipse cx="26" cy="33" rx="19" ry="14" transform="rotate(18 26 33)" fill="url(#sg)"/><path d="M27 9Q33 6 33 16" stroke="#2d2d33" stroke-width="1.8" fill="none" stroke-linecap="round"/><circle cx="25.5" cy="8.5" r="4.5" fill="#d9e0ee"/><circle cx="12.5" cy="22" r="3" fill="#e5420e"/><circle cx="26.5" cy="28.5" r="3.8" fill="#e5420e"/><path d="M11 34Q17 40 25 39" stroke="#c4cde0" stroke-width="1.2" fill="none"/></svg>
</body></html>
